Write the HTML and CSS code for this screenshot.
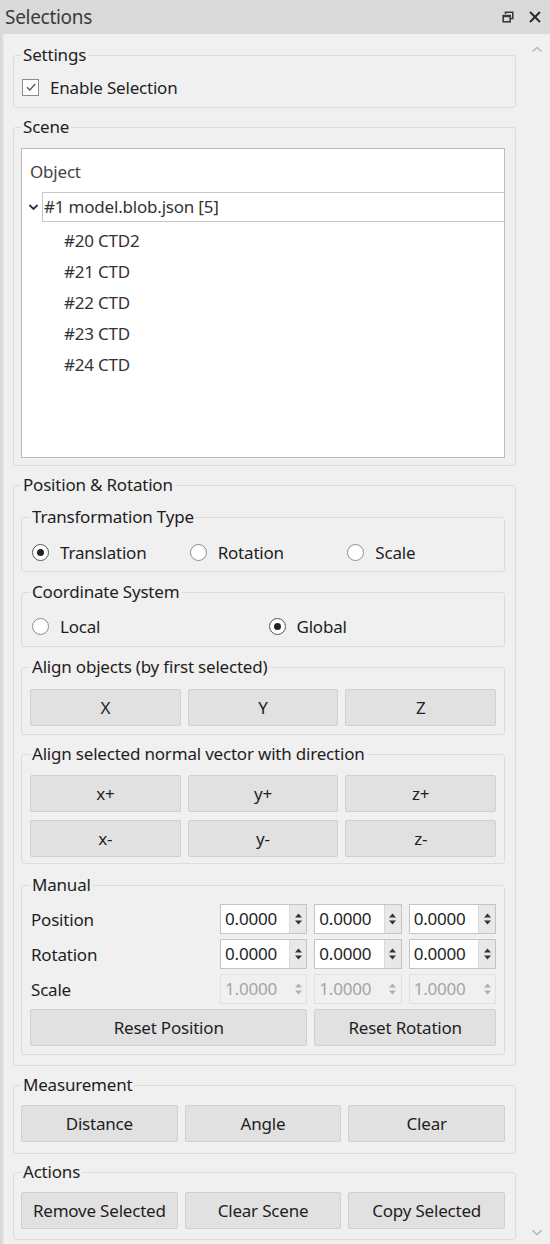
FILE: index.html
```html
<!DOCTYPE html>
<html>
<head>
<meta charset="utf-8">
<title>Selections</title>
<link rel="stylesheet" href="styles.css">
</head>
<body>
<div class="dock">
  <div class="titlebar">
    <span class="title">Selections</span>
    <span class="tb-btn float-btn"><svg width="12" height="12" viewBox="0 0 12 12"><path d="M3.5 3V1.2h7.3v6.3H8.5" fill="none" stroke="#3a3a3a" stroke-width="1.6"/><rect x="1.2" y="4.6" width="7" height="6.2" fill="none" stroke="#3a3a3a" stroke-width="1.6"/><rect x="1.2" y="4.2" width="7" height="2" fill="#3a3a3a"/></svg></span>
    <span class="tb-btn shut-btn"><span class="xmark"></span></span>
  </div>
  <div class="body">
    <div class="edge"></div>
    <div class="panel">
      <fieldset class="group outer g-settings">
        <legend>Settings</legend>
        <label class="check"><span class="cbox"><svg width="12" height="12" viewBox="0 0 12 12"><path d="M2 6.2l2.8 2.8L10.2 3" fill="none" stroke="#555" stroke-width="1.3"/></svg></span>Enable Selection</label>
      </fieldset>

      <fieldset class="group outer g-scene">
        <legend>Scene</legend>
        <div class="tree">
          <div class="tree-header">Object</div>
          <div class="tree-root">
            <span class="chev"><svg width="11" height="8" viewBox="0 0 11 8"><path d="M1.5 2l4 4 4-4" fill="none" stroke="#333" stroke-width="1.8"/></svg></span>
            <span class="root-label">#1 model.blob.json [5]</span>
          </div>
          <div class="tree-child">#20 CTD2</div>
          <div class="tree-child">#21 CTD</div>
          <div class="tree-child">#22 CTD</div>
          <div class="tree-child">#23 CTD</div>
          <div class="tree-child">#24 CTD</div>
        </div>
      </fieldset>

      <fieldset class="group outer g-posrot">
        <legend>Position &amp; Rotation</legend>

        <fieldset class="group inner g-tt">
          <legend>Transformation Type</legend>
          <div class="cols3">
            <label class="radio"><span class="rdot on"></span>Translation</label>
            <label class="radio"><span class="rdot"></span>Rotation</label>
            <label class="radio"><span class="rdot"></span>Scale</label>
          </div>
        </fieldset>

        <fieldset class="group inner g-cs">
          <legend>Coordinate System</legend>
          <div class="cols2">
            <label class="radio"><span class="rdot"></span>Local</label>
            <label class="radio"><span class="rdot on"></span>Global</label>
          </div>
        </fieldset>

        <fieldset class="group inner g-align">
          <legend>Align objects (by first selected)</legend>
          <div class="cols3">
            <button class="btn">X</button>
            <button class="btn">Y</button>
            <button class="btn">Z</button>
          </div>
        </fieldset>

        <fieldset class="group inner g-normal">
          <legend>Align selected normal vector with direction</legend>
          <div class="cols3 rows2">
            <button class="btn">x+</button>
            <button class="btn">y+</button>
            <button class="btn">z+</button>
            <button class="btn">x-</button>
            <button class="btn">y-</button>
            <button class="btn">z-</button>
          </div>
        </fieldset>

        <fieldset class="group inner g-manual">
          <legend>Manual</legend>
          <div class="manual">
            <span class="mlabel">Position</span>
            <span class="spin"><span class="val">0.0000</span><span class="arrows"><svg width="9" height="14" viewBox="0 0 9 14"><path d="M4.5 1.5L8 5.5H1z" fill="#333"/><path d="M4.5 12.5L8 8.5H1z" fill="#333"/></svg></span></span>
            <span class="spin"><span class="val">0.0000</span><span class="arrows"><svg width="9" height="14" viewBox="0 0 9 14"><path d="M4.5 1.5L8 5.5H1z" fill="#333"/><path d="M4.5 12.5L8 8.5H1z" fill="#333"/></svg></span></span>
            <span class="spin"><span class="val">0.0000</span><span class="arrows"><svg width="9" height="14" viewBox="0 0 9 14"><path d="M4.5 1.5L8 5.5H1z" fill="#333"/><path d="M4.5 12.5L8 8.5H1z" fill="#333"/></svg></span></span>

            <span class="mlabel">Rotation</span>
            <span class="spin"><span class="val">0.0000</span><span class="arrows"><svg width="9" height="14" viewBox="0 0 9 14"><path d="M4.5 1.5L8 5.5H1z" fill="#333"/><path d="M4.5 12.5L8 8.5H1z" fill="#333"/></svg></span></span>
            <span class="spin"><span class="val">0.0000</span><span class="arrows"><svg width="9" height="14" viewBox="0 0 9 14"><path d="M4.5 1.5L8 5.5H1z" fill="#333"/><path d="M4.5 12.5L8 8.5H1z" fill="#333"/></svg></span></span>
            <span class="spin"><span class="val">0.0000</span><span class="arrows"><svg width="9" height="14" viewBox="0 0 9 14"><path d="M4.5 1.5L8 5.5H1z" fill="#333"/><path d="M4.5 12.5L8 8.5H1z" fill="#333"/></svg></span></span>

            <span class="mlabel">Scale</span>
            <span class="spin disabled"><span class="val">1.0000</span><span class="arrows"><svg width="9" height="14" viewBox="0 0 9 14"><path d="M4.5 1.5L8 5.5H1z" fill="#b0b0b0"/><path d="M4.5 12.5L8 8.5H1z" fill="#b0b0b0"/></svg></span></span>
            <span class="spin disabled"><span class="val">1.0000</span><span class="arrows"><svg width="9" height="14" viewBox="0 0 9 14"><path d="M4.5 1.5L8 5.5H1z" fill="#b0b0b0"/><path d="M4.5 12.5L8 8.5H1z" fill="#b0b0b0"/></svg></span></span>
            <span class="spin disabled"><span class="val">1.0000</span><span class="arrows"><svg width="9" height="14" viewBox="0 0 9 14"><path d="M4.5 1.5L8 5.5H1z" fill="#b0b0b0"/><path d="M4.5 12.5L8 8.5H1z" fill="#b0b0b0"/></svg></span></span>

            <button class="btn reset-pos">Reset Position</button>
            <button class="btn reset-rot">Reset Rotation</button>
          </div>
        </fieldset>
      </fieldset>

      <fieldset class="group outer g-measure">
        <legend>Measurement</legend>
        <div class="cols3">
          <button class="btn">Distance</button>
          <button class="btn">Angle</button>
          <button class="btn">Clear</button>
        </div>
      </fieldset>

      <fieldset class="group outer g-actions">
        <legend>Actions</legend>
        <div class="cols3">
          <button class="btn">Remove Selected</button>
          <button class="btn">Clear Scene</button>
          <button class="btn">Copy Selected</button>
        </div>
      </fieldset>
    </div>
    <div class="scrollbar">
      <svg width="12" height="7" viewBox="0 0 12 7"><path d="M1.5 5.5L6 1.5l4.5 4" fill="none" stroke="#b4b4b4" stroke-width="1.4"/></svg>
      <svg width="12" height="7" viewBox="0 0 12 7"><path d="M1.5 1.5L6 5.5l4.5-4" fill="none" stroke="#b4b4b4" stroke-width="1.4"/></svg>
    </div>
  </div>
</div>
</body>
</html>
```

FILE: styles.css
```css
* { box-sizing: border-box; }
html, body { margin: 0; padding: 0; }
body {
  width: 550px;
  height: 1244px;
  overflow: hidden;
  background: #f0f0f0;
  font-family: "Noto Sans", "Open Sans", sans-serif;
  font-size: 17px;
  letter-spacing: -0.2px;
  color: #1e1e1e;
}
.dock { width: 550px; height: 1244px; display: flex; flex-direction: column; }

.titlebar {
  height: 34px; flex: none;
  background: #dadada;
  display: flex; align-items: center;
  padding: 0 7px 0 5px;
}
.title { flex: 1; font-size: 19px; color: #3a3a3a; letter-spacing: -0.3px; }
.tb-btn { width: 16px; height: 16px; flex: none; display: flex; align-items: center; justify-content: center; }
.float-btn { margin-right: 11px; }
.tb-btn svg { display: block; }
.xmark { position: relative; width: 12px; height: 12px; display: block; }
.xmark::before, .xmark::after {
  content: "";
  position: absolute;
  left: -1px; top: 5px;
  width: 14px; height: 2px;
  background: #2a2a2a;
}
.xmark::before { transform: rotate(45deg); }
.xmark::after { transform: rotate(-45deg); }

.body { flex: 1; display: flex; min-height: 0; }
.edge { width: 4px; flex: none; background: linear-gradient(to right, #d4d4d4, #e6e6e6); }
.panel { flex: 1; padding: 11px 7px 0 9px; overflow: hidden; }
.scrollbar {
  width: 27px; flex: none;
  display: flex; flex-direction: column; justify-content: space-between; align-items: center;
  padding: 12px 0 8px;
}

fieldset.group {
  margin: 0;
  min-inline-size: 0;
  border: 1px solid #dcdcdc;
  border-radius: 3px;
}
fieldset.group > legend {
  padding: 0 2px;
  height: 20px;
  line-height: 20px;
}
.outer { padding-left: 7px; padding-right: 10px; }
.inner { padding-left: 8px; padding-right: 8px; }

.g-settings { padding-top: 11px; padding-bottom: 9px; }
.g-scene    { margin-top: 9px !important; padding-top: 11px; padding-bottom: 7px; }
.g-posrot   { margin-top: 9px !important; padding-top: 12px; padding-bottom: 10px; }
.g-tt       { padding-top: 14px; padding-bottom: 8px; }
.g-cs       { margin-top: 10px !important; padding-top: 13px; padding-bottom: 9px; }
.g-align    { margin-top: 10px !important; padding-top: 12px; padding-bottom: 8px; }
.g-normal   { margin-top: 9px !important; padding-top: 11px; padding-bottom: 6px; }
.g-manual   { margin-top: 11px !important; padding-top: 9px; padding-bottom: 8px; }
.g-measure  { margin-top: 9px !important; padding-top: 10px; padding-bottom: 11px; }
.g-actions  { margin-top: 8px !important; padding-top: 10px; padding-bottom: 10px; }

.check, .radio {
  display: flex; align-items: center; gap: 11px;
  height: 22px;
}
.check { padding-left: 1px; }
.cbox {
  width: 17px; height: 17px;
  border: 1px solid #8c8c8c; background: #fff;
  display: flex; align-items: center; justify-content: center;
}
.radio { padding-left: 2px; }
.rdot {
  width: 17px; height: 17px; border-radius: 50%;
  border: 1px solid #8c8c8c; background: #fff;
  display: flex; align-items: center; justify-content: center;
}
.rdot.on { border-color: #555; }
.rdot.on::after {
  content: ""; width: 7px; height: 7px; border-radius: 50%; background: #222;
}

.tree {
  height: 310px;
  background: #fff;
  border: 1px solid #bdbdbd;
  color: #333;
}
.tree-header { height: 43px; padding: 12px 0 0 8px; line-height: 22px; color: #444; }
.tree-root { display: flex; height: 30px; padding-left: 3px; }
.chev { width: 17px; display: flex; align-items: center; justify-content: center; }
.root-label { flex: 1; border: 1px solid #c8c8c8; border-right: 0; line-height: 28px; padding-left: 1px; }
.tree-child { height: 31px; line-height: 31px; padding-left: 42px; }
.tree-root + .tree-child { margin-top: 3px; }

.cols3 { display: grid; grid-template-columns: repeat(3, 1fr); column-gap: 7px; row-gap: 8px; }
.cols2 { display: grid; grid-template-columns: repeat(2, 1fr); column-gap: 7px; }

.btn {
  height: 37px;
  margin: 0;
  background: #e1e1e1;
  border: 1px solid #cfcfcf;
  border-radius: 2px;
  font-family: inherit;
  font-size: 17px;
  letter-spacing: -0.2px;
  color: #1e1e1e;
  padding: 0;
}

.manual {
  display: grid;
  grid-template-columns: 183px 1fr 1fr 1fr;
  grid-template-rows: 30px 30px 30px 37px;
  column-gap: 7px;
  row-gap: 5px;
  align-items: center;
}
.mlabel { padding-left: 1px; }
.spin {
  height: 30px;
  display: flex;
  background: #fff;
  border: 1px solid #c4c4c4;
}
.spin .val { flex: 1; line-height: 28px; padding-left: 4px; }
.spin .arrows {
  width: 17px; background: #e8e8e8; border-left: 1px solid #dadada;
  display: flex; align-items: center; justify-content: center;
}
.spin.disabled { background: #f0f0f0; border-color: #e0e0e0; color: #a4a4a4; }
.spin.disabled .arrows { background: #f0f0f0; border-left-color: #f0f0f0; }
.reset-pos { grid-column: 1 / 3; }
.reset-rot { grid-column: 3 / 5; }
```
